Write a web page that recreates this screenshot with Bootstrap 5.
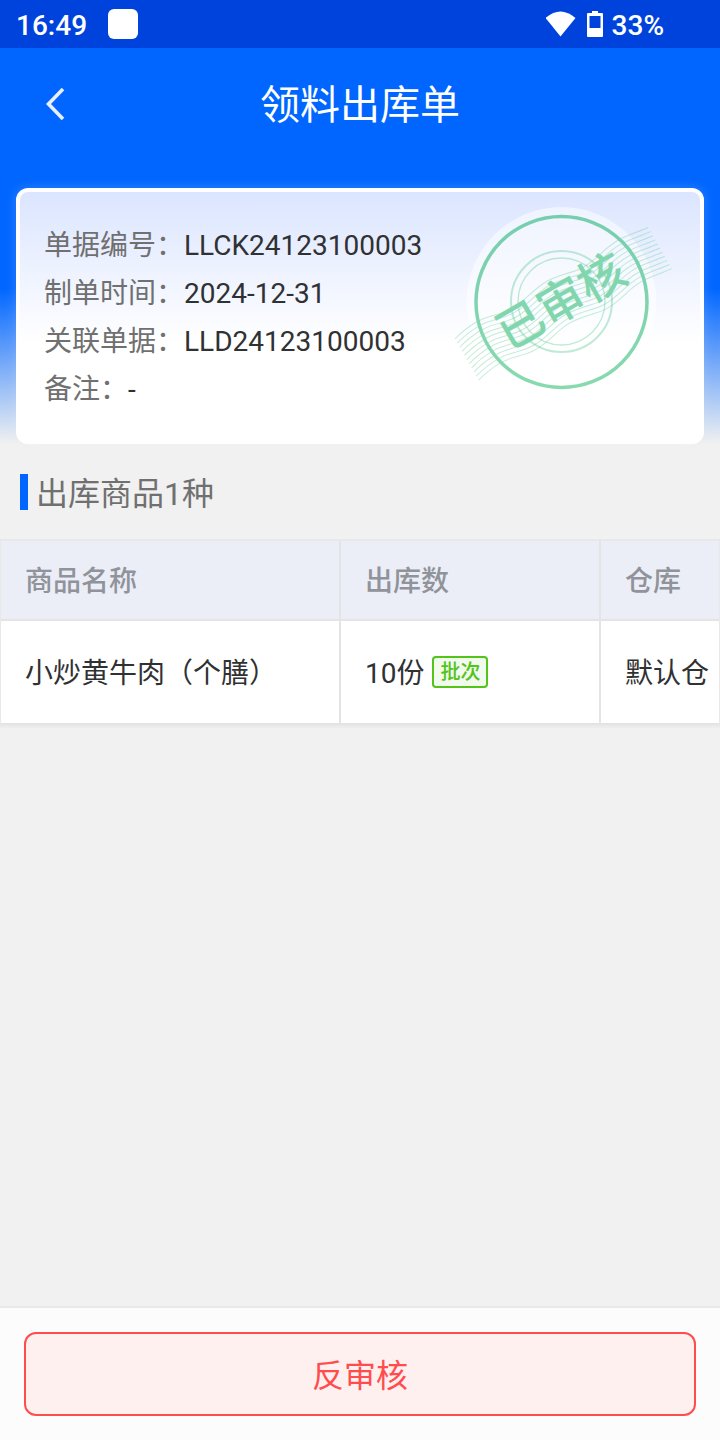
<!DOCTYPE html>
<html lang="zh-CN">
<head>
<meta charset="utf-8">
<meta name="viewport" content="width=device-width, initial-scale=1">
<title>领料出库单</title>
<link rel="stylesheet" href="https://cdn.jsdelivr.net/npm/bootstrap@5.3.0/dist/css/bootstrap.min.css">
<style>
  body { font-family: Roboto, "Noto Sans CJK SC", sans-serif; font-size: 28px; line-height: 48px; color: #303133; background: #f1f1f1; }
  .status-bar { height: 48px; background: #0043dc; font-weight: 500; }
  .hero { background: linear-gradient(#0066ff 0, #0066ff 240px, #f1f1f1 396px); }
  .title-bar { height: 112px; }
  .title-bar h1 { font-size: 40px; line-height: 56px; font-weight: 400; }
  .back-btn { left: 32px; top: 32px; width: 48px; height: 48px; }
  .info-card { margin: 28px 16px 0; padding: 30px 24px 26px; border: 4px solid #fff; border-radius: 12px; background: linear-gradient(#dbe5ff, #fff 152px); box-shadow: 0 0 12px rgba(241, 241, 241, .2); }
  .info-card dt { font-weight: 400; color: #707070; }
  .stamp { right: 20px; top: 8px; width: 230px; height: 200px; }
  .section-title { font-size: 32px; line-height: 32px; font-weight: 400; color: #707070; margin: 30px 20px 29px; padding: 4px 0 0 8px; border-left: 8px solid #0066ff; }
  .goods { table-layout: fixed; border-collapse: separate; border-spacing: 0; border: 1px solid #e8e8e8; border-top-width: 2px; background: #fff; box-shadow: 0 2px 0 #ececec; white-space: nowrap; }
  .goods th, .goods td { padding: 0 8px 0 24px; border: 0 solid #e4e4e6; border-width: 0 2px 2px 0; }
  .goods th:last-child, .goods td:last-child { border-right-width: 0; }
  .goods th { height: 80px; font-weight: 500; color: #909399; background: #ebeef7; }
  .goods td { height: 104px; }
  .col-name { width: 340px; }
  .col-count { width: 260px; }
  .batch-tag { height: 32px; padding: 2px 6px 0; border: 2px solid #52c41a; border-radius: 4px; background: #f2faee; color: #52c41a; font-size: 20px; line-height: 24px; font-weight: 500; }
  .action-bar { padding: 24px; border-top: 2px solid #e9e9e9; background: #fcfcfc; }
  .revoke-btn { height: 84px; border: 2px solid #ff4d4f; border-radius: 12px; background: #fff0f0; color: #ff4d4f; font-size: 32px; }
</style>
</head>
<body>
<div class="d-flex flex-column min-vh-100">
  <div class="status-bar d-flex align-items-center text-white">
    <span class="ms-3 pt-1">16:49</span>
    <svg class="ms-3" width="40" height="48" viewBox="0 0 40 48" aria-hidden="true"><rect x="5" y="9" width="30" height="30" rx="6" fill="#fff"/></svg>
    <svg class="ms-auto" width="66" height="48" viewBox="0 0 66 48" aria-hidden="true">
      <path d="M-1 18Q14 5 29 18L14 36.500Z" fill="#fff" transform="translate(0.500 0)"/>
      <path d="M46 11h6v2h4q1 0 1 1v22q0 1-1 1H42q-1 0-1-1V14q0-1 1-1h4ZM43.500 16v12h11V16Z" fill="#fff" fill-rule="evenodd"/>
    </svg>
    <span class="me-5 pe-2 pt-1">33%</span>
  </div>

  <header class="hero">
    <div class="title-bar position-relative d-flex align-items-center justify-content-center text-white">
      <button type="button" class="back-btn btn p-0 border-0 position-absolute d-flex" aria-label="返回">
        <svg width="48" height="48" viewBox="0 0 48 48" fill="none" stroke="#e8efff" stroke-width="3.600"><path d="M31 9L16.500 24L31 39"/></svg>
      </button>
      <h1 class="m-0 pt-1">领料出库单</h1>
    </div>
    <section class="info-card position-relative">
      <dl class="m-0">
        <div class="d-flex"><dt>单据编号：</dt><dd class="m-0">LLCK24123100003</dd></div>
        <div class="d-flex"><dt>制单时间：</dt><dd class="m-0">2024-12-31</dd></div>
        <div class="d-flex"><dt>关联单据：</dt><dd class="m-0">LLD24123100003</dd></div>
        <div class="d-flex"><dt>备注：</dt><dd class="m-0">-</dd></div>
      </dl>
      <svg class="stamp position-absolute" viewBox="450 200 230 200" fill="none" role="img" aria-label="已审核">
        <defs>
          <linearGradient id="ink" gradientUnits="userSpaceOnUse" x1="0" y1="215" x2="0" y2="390"><stop stop-color="#76ceae"/><stop offset="1" stop-color="#88daae"/></linearGradient>
          <path id="wave" d="M0 0C10-3 18-4 28-4C42-4 50 2 65 2C82 2 92-4 108-4C124-4 134 2 148 2C164 2 174-4 190-4C202-4 212-1 223 0"/>
        </defs>
        <circle cx="561.500" cy="302" r="95" fill="#fff" fill-opacity=".5"/>
        <g stroke="#62cb98">
          <g stroke-opacity=".4"><circle cx="561.500" cy="301.500" r="50.500" stroke-width="2"/><circle cx="561.500" cy="301.500" r="43.500" stroke-width="1.300"/></g>
          <g transform="translate(455 339) rotate(-30)" stroke-opacity=".36">
            <use href="#wave"/><use href="#wave" y="4.750"/><use href="#wave" y="9.500"/><use href="#wave" y="14.250"/><use href="#wave" y="19"/><use href="#wave" y="23.750"/><use href="#wave" y="28.500"/><use href="#wave" y="33.250"/><use href="#wave" y="38"/><use href="#wave" y="42.750"/><use href="#wave" y="47.500"/>
          </g>
        </g>
        <circle cx="561.500" cy="302" r="85.500" stroke="url(#ink)" stroke-width="3.500"/>
        <text transform="translate(561 301) rotate(-30)" y="17" text-anchor="middle" font-size="47" font-weight="500" fill="#81d6ae">已审核</text>
      </svg>
    </section>
  </header>

  <main class="flex-grow-1">
    <h2 class="section-title">出库商品1种</h2>
    <table class="goods w-100">
      <thead>
        <tr><th class="col-name pt-1" scope="col">商品名称</th><th class="col-count pt-1" scope="col">出库数</th><th class="pt-1" scope="col">仓库</th></tr>
      </thead>
      <tbody>
        <tr>
          <td class="pt-1">小炒黄牛肉（个膳）</td>
          <td><div class="d-flex align-items-center gap-2"><span class="pt-1">10份</span><span class="batch-tag">批次</span></div></td>
          <td class="pt-1">默认仓</td>
        </tr>
      </tbody>
    </table>
  </main>

  <footer class="action-bar">
    <button type="button" class="revoke-btn btn w-100 p-0 pt-1">反审核</button>
  </footer>
</div>
<script src="https://cdn.jsdelivr.net/npm/bootstrap@5.3.0/dist/js/bootstrap.bundle.min.js"></script>
</body>
</html>
